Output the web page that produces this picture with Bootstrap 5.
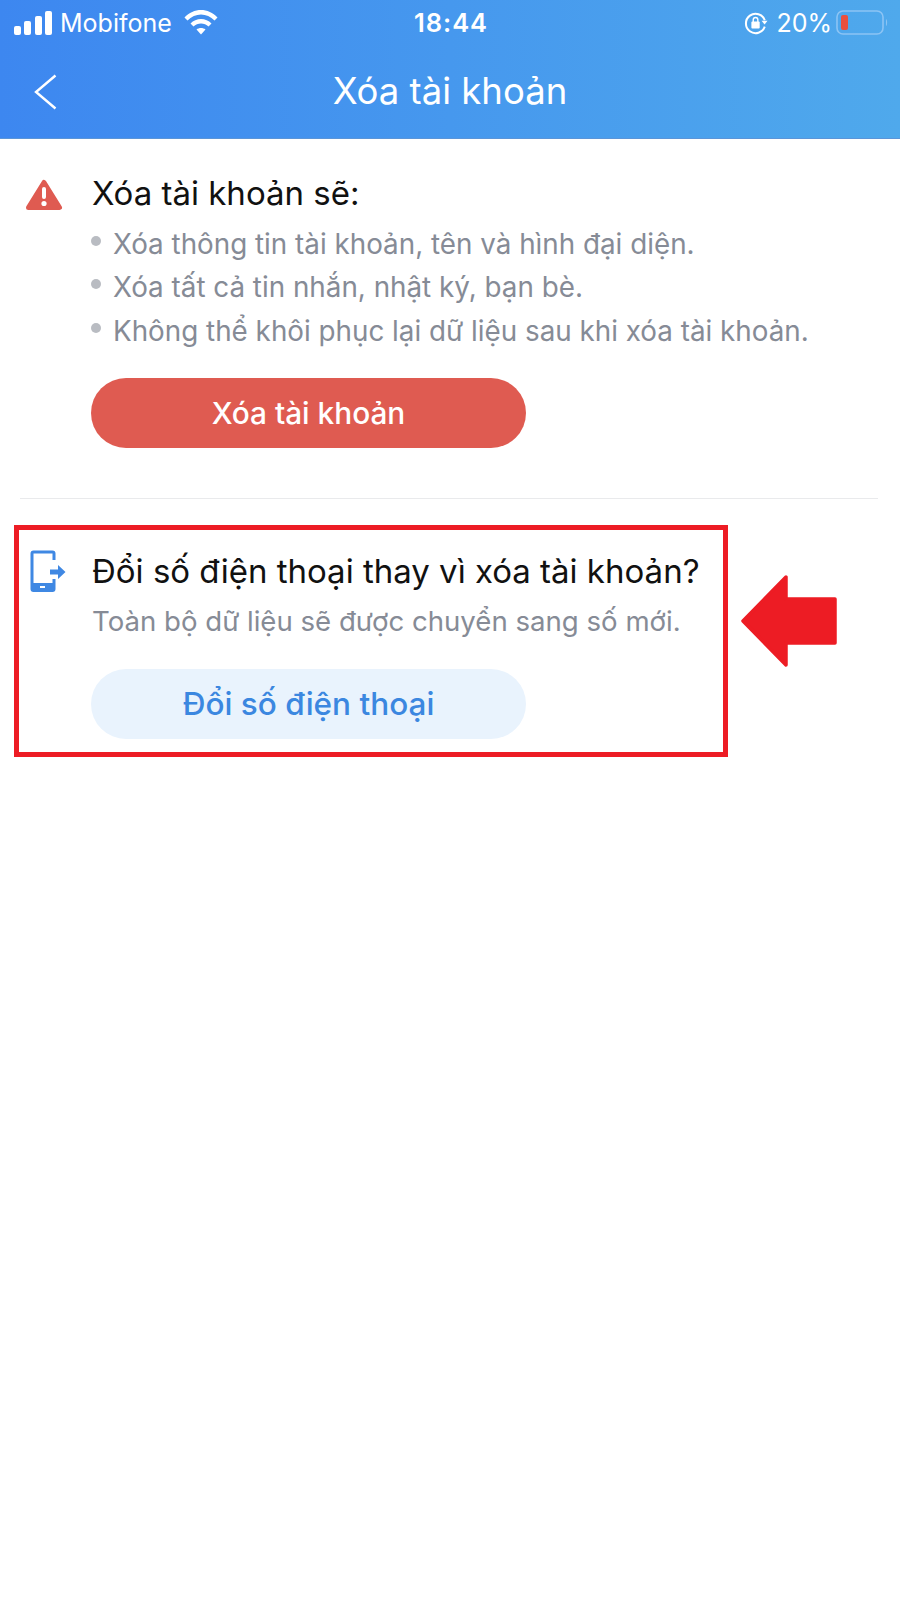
<!DOCTYPE html>
<html lang="vi">
<head>
    <meta charset="UTF-8">
    <meta name="viewport" content="width=device-width, initial-scale=1.0">
    <title>Xóa tài khoản</title>
    <link href="https://cdn.jsdelivr.net/npm/bootstrap@5.3.0/dist/css/bootstrap.min.css" rel="stylesheet">
    <style>
        body {
            background-color: #fff;
            font-family: Inter, "Noto Sans", sans-serif;
            width: 900px;
            min-height: 1600px;
            position: relative;
            overflow: hidden;
        }
        .app-head {
            height: 139px;
            background: linear-gradient(90deg, #3d87f0 0%, #4fa9ec 100%);
            color: #fff;
            border-bottom: 1px solid #5b95d8;
        }
        .status-row {
            height: 46px;
            font-size: 25px;
            line-height: 46px;
            padding: 0 12px 0 14px;
        }
        .status-side { flex: 1 1 0; }
        .status-time { font-size: 25.5px; font-weight: 600; letter-spacing: 1px; }
        .wifi-gap { margin-left: 12px; margin-top: -2px; }
        .title-row {
            height: 92px;
            padding-left: 34px;
            position: relative;
        }
        .title-row h1 {
            font-size: 36.5px;
            font-weight: 400;
            margin: 0 0 2px 0;
            line-height: 1;
            flex: 1;
            text-align: center;
            padding-right: 57px;
        }
        .warn-block { padding: 36px 0 0 25px; }
        .side-icon { width: 67px; flex-shrink: 0; }
        .head-text {
            font-size: 33px;
            line-height: 36px;
            color: #111;
            margin: 0;
            white-space: nowrap;
        }
        .grey-list {
            list-style: none;
            padding: 0;
            margin: 12px 0 0 0;
            font-size: 27.8px;
            line-height: 43.4px;
            color: #868b96;
            white-space: nowrap;
        }
        .grey-list li { display: flex; align-items: center; }
        .grey-list li::before {
            content: "";
            width: 10px;
            height: 10px;
            border-radius: 50%;
            background: #b9bcc2;
            margin-right: 12px;
            margin-left: -1px;
            margin-top: -8px;
            flex-shrink: 0;
        }
        .pill-btn {
            display: block;
            width: 435px;
            height: 70px;
            margin-left: -1px;
            border-radius: 35px;
            border: 0;
            font-weight: 500;
            line-height: 68px;
            padding: 0;
        }
        .pill-red { background: #df5b51; color: #fff; font-size: 29.8px; margin-top: 25px; }
        .pill-blue { background: #e9f3fd; color: #3b87e0; font-size: 31.5px; margin-top: 30px; }
        .thin-line {
            border-top: 1px solid #e9eaec;
            margin: 50px 22px 0 20px;
        }
        .mark-box {
            width: 714px;
            height: 232px;
            margin: 26px 0 0 14px;
            border: 5px solid #ed1c24;
            padding: 23px 0 0 11px;
        }
        .mark-box .side-icon { width: 62px; margin-top: -7px; }
        .mark-sub {
            font-size: 27.6px;
            line-height: 36px;
            color: #868b96;
            margin: 14px 0 0 0;
            white-space: nowrap;
        }
        .mark-arrow {
            position: absolute;
            left: 740px;
            top: 574px;
        }
    </style>
</head>
<body>
    <header class="app-head">
        <div class="status-row d-flex align-items-center">
            <div class="status-side d-flex align-items-center">
                <svg width="38" height="24" viewBox="0 0 38 24" fill="#fff">
                    <rect x="0" y="15" width="7" height="9" rx="2"/>
                    <rect x="10" y="10" width="7" height="14" rx="2"/>
                    <rect x="21" y="5" width="7" height="19" rx="2"/>
                    <rect x="31" y="0" width="7" height="24" rx="2"/>
                </svg>
                <span class="ms-2">Mobifone</span>
                <svg class="wifi-gap" width="34" height="26" viewBox="0 0 34 26" fill="#fff">
                    <path d="M0.5 8.5C9.5 -1.5 24.5 -1.5 33.5 8.5L30.5 11.5C23 3.5 11 3.5 3.5 11.5Z"/>
                    <path d="M6.5 14.5C12 8.5 22 8.5 27.5 14.5L24.5 17.5C20.5 13.5 13.5 13.5 9.5 17.5Z"/>
                    <path d="M12.500 20.500C15 18.500 19 18.500 21.500 20.500L17 25.500Z"/>
                </svg>
            </div>
            <div class="status-time">18:44</div>
            <div class="status-side d-flex align-items-center justify-content-end">
                <svg width="24" height="24" viewBox="0 0 26 26" fill="none">
                    <path d="M22.5 10A10.5 10.5 0 1 0 22.5 17" stroke="#fff" stroke-width="2.2"/>
                    <path d="M19 10.5h6.5l-3.2 4z" fill="#fff"/>
                    <rect x="8" y="11.5" width="9" height="7.5" rx="1" fill="#fff"/>
                    <path d="M10 12V9.5a2.5 2.5 0 0 1 5 0V12" stroke="#fff" stroke-width="1.5"/>
                </svg>
                <span class="ms-2">20%</span>
                <svg class="ms-1" width="52" height="26" viewBox="0 0 52 26" fill="none">
                    <rect x="1" y="1" width="46" height="23" rx="6" stroke="#8cc4f4" stroke-width="1.6"/>
                    <rect x="5" y="5" width="7" height="15" rx="2" fill="#ea4f3d"/>
                    <path d="M50 9c1.5 1 1.5 6 0 7z" fill="#8cc4f4"/>
                </svg>
            </div>
        </div>
        <div class="title-row d-flex align-items-center">
            <svg width="23" height="36" viewBox="0 0 23 36" fill="none">
                <path d="M21.5 1.5L2 18L21.5 34.5" stroke="#fff" stroke-width="2.4"/>
            </svg>
            <h1>Xóa tài khoản</h1>
        </div>
    </header>

    <main>
        <section class="warn-block d-flex">
            <div class="side-icon">
                <svg width="38" height="32" viewBox="0 0 38 32" class="mt-1">
                    <path d="M19 3.500L34.500 28.500H3.500Z" fill="#df5b51" stroke="#df5b51" stroke-width="5" stroke-linejoin="round"/>
                    <rect x="17" y="8" width="4" height="12" rx="2" fill="#fff"/>
                    <circle cx="19" cy="24.5" r="2.6" fill="#fff"/>
                </svg>
            </div>
            <div>
                <p class="head-text">Xóa tài khoản sẽ:</p>
                <ul class="grey-list">
                    <li>Xóa thông tin tài khoản, tên và hình đại diện.</li>
                    <li>Xóa tất cả tin nhắn, nhật ký, bạn bè.</li>
                    <li>Không thể khôi phục lại dữ liệu sau khi xóa tài khoản.</li>
                </ul>
                <button type="button" class="btn pill-btn pill-red">Xóa tài khoản</button>
            </div>
        </section>
        <div class="thin-line"></div>
        <section class="mark-box d-flex">
            <div class="side-icon">
                <svg width="36" height="42" viewBox="0 0 36 42" class="mt-1">
                    <path d="M24 10V3.500a1.500 1.500 0 0 0-1.500-1.500H3.500a1.500 1.500 0 0 0-1.500 1.500V39a1.500 1.500 0 0 0 1.500 1.500h19a1.500 1.500 0 0 0 1.500-1.500V29" fill="none" stroke="#3f88e3" stroke-width="3"/>
                    <rect x="2" y="33" width="22" height="8" fill="#3f88e3"/>
                    <rect x="10" y="36" width="5" height="2" fill="#fff"/>
                    <path d="M20 19.500h8V15l7.500 7-7.500 7v-4.500h-8z" fill="#3f88e3"/>
                </svg>
            </div>
            <div>
                <p class="head-text">Đổi số điện thoại thay vì xóa tài khoản?</p>
                <p class="mark-sub">Toàn bộ dữ liệu sẽ được chuyển sang số mới.</p>
                <button type="button" class="btn pill-btn pill-blue">Đổi số điện thoại</button>
            </div>
        </section>
    </main>

    <svg class="mark-arrow" width="98" height="94" viewBox="0 0 98 94">
        <path d="M3 47L46 3V25H95V69H46V91Z" fill="#ed1c24" stroke="#ed1c24" stroke-width="3.5" stroke-linejoin="round"/>
    </svg>

    <script src="https://cdn.jsdelivr.net/npm/bootstrap@5.3.0/dist/js/bootstrap.bundle.min.js"></script>
</body>
</html>
